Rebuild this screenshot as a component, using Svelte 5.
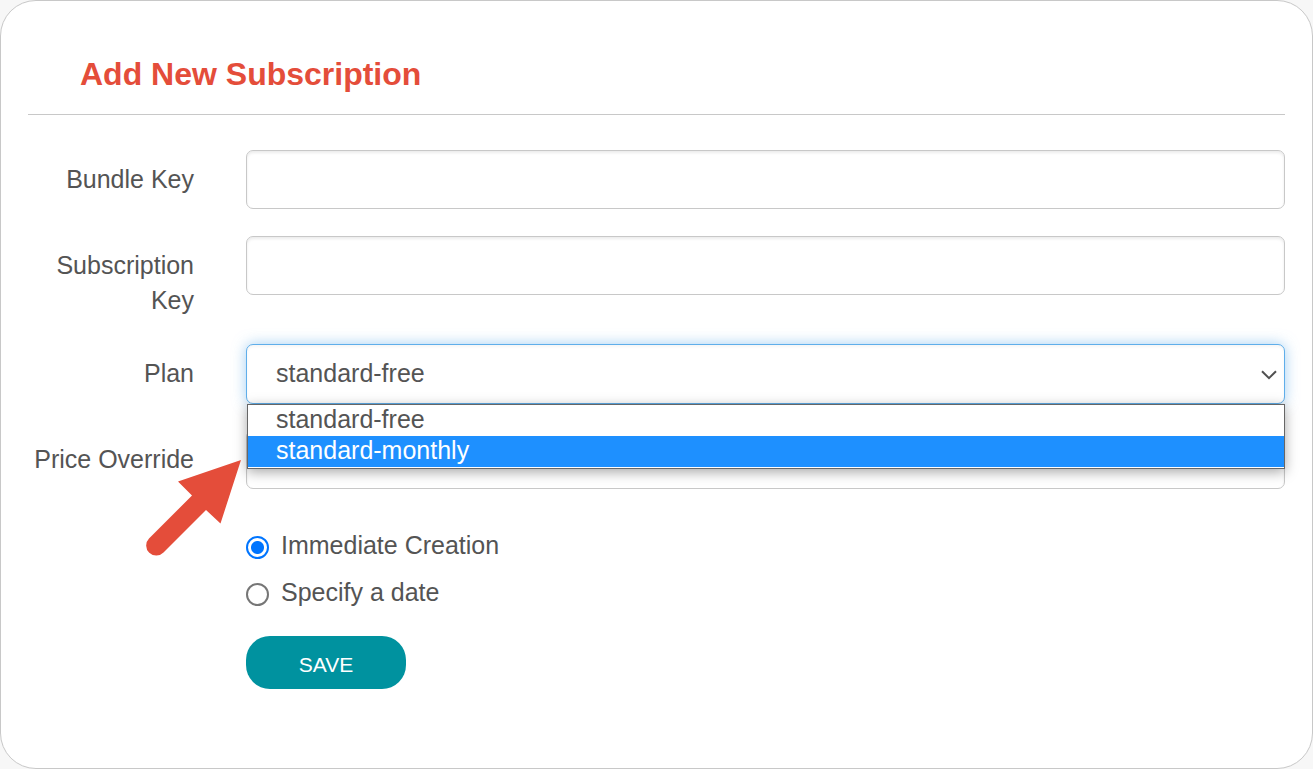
<script>
  const plans = ['standard-free', 'standard-monthly'];

  let bundleKey = $state('');
  let subscriptionKey = $state('');
  let priceOverride = $state('');
  let plan = $state('standard-free');
  let active = $state('standard-monthly');
  let open = $state(true);
  let timing = $state('immediate');

  function choose(name) {
    plan = name;
    open = false;
  }

  function toggle(event) {
    event.preventDefault();
    open = !open;
  }
</script>

<main class="card">
  <h1>Add New Subscription</h1>

  <form onsubmit={(event) => event.preventDefault()}>
    <div class="row">
      <label for="bundle-key">Bundle Key</label>
      <input id="bundle-key" class="field" type="text" bind:value={bundleKey} />
    </div>

    <div class="row">
      <label for="subscription-key">Subscription Key</label>
      <input id="subscription-key" class="field" type="text" bind:value={subscriptionKey} />
    </div>

    <div class="row">
      <label for="plan">Plan</label>
      <div class="picker">
        <select id="plan" class="field" class:open bind:value={plan} onmousedown={toggle}>
          {#each plans as name}
            <option value={name}>{name}</option>
          {/each}
        </select>
        <svg class="chevron" viewBox="0 0 16 10" aria-hidden="true">
          <path d="M1 1.2 8 8.2 15 1.2" fill="none" stroke="#505050" stroke-width="2" />
        </svg>
        {#if open}
          <div class="menu">
            {#each plans as name}
              <button
                type="button"
                class:active={name === active}
                onmouseenter={() => (active = name)}
                onclick={() => choose(name)}>{name}</button>
            {/each}
          </div>
          <svg class="arrow" viewBox="0 0 96 96" aria-hidden="true">
            <path
              d="M95 1 74.500 64.500 60 51 17.500 93.500A10 10 0 0 1 3 79.500L46 36.500 32 22.500Z"
              fill="#e44d3a"
            />
          </svg>
        {/if}
      </div>
    </div>

    <div class="row">
      <label for="price-override">Price Override</label>
      <input id="price-override" class="field" type="text" bind:value={priceOverride} />
    </div>

    <div class="row">
      <div class="actions">
        <label class="choice">
          <input type="radio" name="timing" value="immediate" bind:group={timing} />
          Immediate Creation
        </label>
        <label class="choice">
          <input type="radio" name="timing" value="date" bind:group={timing} />
          Specify a date
        </label>
        <button class="save" type="submit">SAVE</button>
      </div>
    </div>
  </form>
</main>

<style>
  :global(body) {
    margin: 0;
    background: #f7f7f7;
  }

  .card {
    box-sizing: border-box;
    min-height: 100vh;
    padding: 49px 27px;
    border: 1px solid #c8c8c8;
    border-radius: 36px;
    background: #fff;
    color: #545454;
    font: 25px/35px 'Liberation Sans', Arial, sans-serif;
  }

  h1 {
    margin: 0 0 35px;
    padding: 0 52px 16px;
    border-bottom: 1px solid #c8c8c8;
    color: #e44d3a;
    font-size: 32px;
    line-height: 48px;
  }

  form {
    display: grid;
    gap: 26px;
  }

  .row {
    display: grid;
    grid-template-columns: 166px 1fr;
    column-gap: 52px;
    align-items: start;
    min-height: 60px;
  }

  .row > label {
    padding-top: 12px;
    text-align: right;
  }

  .field {
    box-sizing: border-box;
    display: block;
    width: 100%;
    height: 59px;
    margin: 0;
    padding: 0 29px;
    border: 1px solid #c8c8c8;
    border-radius: 7px;
    outline: none;
    background: #fff;
    box-shadow: inset 0 2px 3px rgba(0, 0, 0, 0.08);
    color: inherit;
    font: inherit;
  }

  .picker {
    position: relative;
  }

  select.field {
    height: 60px;
    padding-bottom: 2px;
    appearance: none;
  }

  .field:focus,
  select.open {
    border-color: #5faeea;
    box-shadow:
      inset 0 2px 3px rgba(0, 0, 0, 0.04),
      0 0 14px rgba(102, 175, 233, 0.6);
  }

  .chevron {
    position: absolute;
    top: 26px;
    right: 8px;
    width: 16px;
    height: 10px;
    pointer-events: none;
  }

  .menu {
    position: absolute;
    z-index: 1;
    top: 60px;
    right: 0;
    left: 1px;
    padding-bottom: 1px;
    border: 1px solid #666;
    background: #fff;
    box-shadow: 0 3px 12px rgba(0, 0, 0, 0.35);
  }

  .menu button {
    display: block;
    width: 100%;
    height: 31px;
    padding: 0 28px 2px;
    border: 0;
    background: none;
    color: inherit;
    font: inherit;
    line-height: 29px;
    text-align: left;
  }

  .menu button.active {
    background: #1e90ff;
    color: #fff;
  }

  .arrow {
    position: absolute;
    z-index: 2;
    top: 115px;
    left: -100px;
    width: 96px;
    height: 96px;
    overflow: visible;
    pointer-events: none;
  }

  .actions {
    display: grid;
    grid-column: 2;
    justify-items: start;
    gap: 12px;
    padding-top: 12px;
  }

  .choice {
    display: flex;
    align-items: center;
    gap: 12px;
  }

  .choice input {
    box-sizing: border-box;
    width: 23px;
    height: 23px;
    margin: 3px 0 0;
    border: 2px solid #767676;
    border-radius: 50%;
    background: #fff;
    appearance: none;
  }

  .choice input:checked {
    border-color: #0075ff;
    background: radial-gradient(circle, #0075ff 6px, #fff 7px);
  }

  .save {
    width: 160px;
    height: 53px;
    margin-top: 14px;
    padding: 4px 0 0;
    border: 0;
    border-radius: 24px;
    background: #00929f;
    color: #fff;
    font: inherit;
    font-size: 21px;
  }
</style>
